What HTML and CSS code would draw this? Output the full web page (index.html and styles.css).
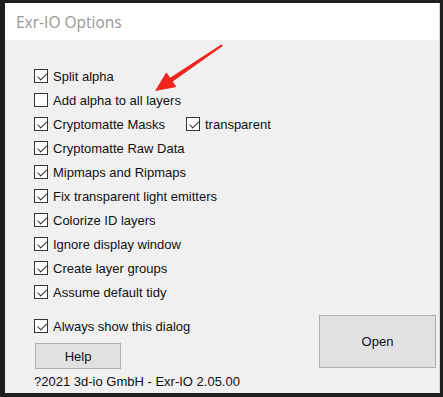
FILE: index.html
```html
<!DOCTYPE html>
<html lang="en">
<head>
  <meta charset="UTF-8" />
  <title>Exr-IO Options</title>
  <link rel="stylesheet" href="styles.css">
</head>
<body>

<div class="window">
  <div class="titlebar">
    <span class="title">Exr-IO Options</span>
  </div>

  <div class="content">
    <div class="options">
      <label class="row"><span class="box checked"></span>Split alpha</label>
      <label class="row"><span class="box"></span>Add alpha to all layers</label>
      <div class="row">
        <label class="opt"><span class="box checked"></span>Cryptomatte Masks</label>
        <label class="opt sub"><span class="box checked"></span>transparent</label>
      </div>
      <label class="row"><span class="box checked"></span>Cryptomatte Raw Data</label>
      <label class="row"><span class="box checked"></span>Mipmaps and Ripmaps</label>
      <label class="row"><span class="box checked"></span>Fix transparent light emitters</label>
      <label class="row"><span class="box checked"></span>Colorize ID layers</label>
      <label class="row"><span class="box checked"></span>Ignore display window</label>
      <label class="row"><span class="box checked"></span>Create layer groups</label>
      <label class="row"><span class="box checked"></span>Assume default tidy</label>
    </div>

    <div class="bottom">
      <div class="bottom-left">
        <label class="row"><span class="box checked"></span>Always show this dialog</label>
        <button class="btn help">Help</button>
        <p class="footer">?2021 3d-io GmbH - Exr-IO 2.05.00</p>
      </div>
      <button class="btn open">Open</button>
    </div>
  </div>

  <!-- red annotation arrow -->
  <svg class="arrow" width="90" height="65" viewBox="0 0 90 65">
    <polygon points="13,55 24.3,36.2 28.1,41.8 79.6,8.2 80.8,9.9 30.7,45.4 34.5,51" fill="#f0261e"/>
  </svg>
</div>

</body>
</html>
```

FILE: styles.css
```css
html, body {
  margin: 0;
  background: #1e1e1e;
}
body {
  width: 443px;
  height: 397px;
  overflow: hidden;
  font-family: 'Liberation Sans', Arial, sans-serif;
  font-size: 13px;
  color: #111;
}
.window {
  position: relative;
  margin: 3px 0 0 5px;
  width: 435px;
  height: 390px;
  background: #f0f0f0;
  border-right: 1px solid #d6d6d6;
  box-sizing: border-box;
}
.titlebar {
  height: 37px;
  background: #fff;
  padding-left: 11px;
  display: flex;
  align-items: center;
}
.title {
  font-family: 'Open Sans', sans-serif;
  font-size: 15.5px;
  color: #979797;
}
.content {
  padding: 24px 0 0 29px;
}
.row {
  display: flex;
  align-items: center;
  height: 24px;
}
.opt {
  display: flex;
  align-items: center;
}
.sub {
  margin-left: 21px;
}
.box {
  position: relative;
  width: 14px;
  height: 14px;
  border: 1px solid #333;
  background: #fff;
  box-sizing: border-box;
  margin-right: 5px;
}
.box.checked::after {
  content: '';
  position: absolute;
  left: 2px;
  top: 1px;
  width: 8px;
  height: 4px;
  border-left: 1px solid #333;
  border-bottom: 1px solid #333;
  transform: rotate(-45deg) translate(-1px, 2px);
}
.bottom {
  display: flex;
  align-items: flex-start;
  margin-top: 10px;
}
.bottom-left {
  width: 285px;
}
.btn {
  font-family: 'Liberation Sans', Arial, sans-serif;
  font-size: 13px;
  color: #111;
  background: #e1e1e1;
  border: 1px solid #adadad;
  padding: 0;
}
.help {
  display: block;
  margin: 5px 0 0 1px;
  width: 86px;
  height: 26px;
}
.open {
  margin-top: 1px;
  width: 117px;
  height: 53px;
}
.footer {
  margin: 5px 0 0;
  line-height: 16px;
}
.arrow {
  position: absolute;
  left: 137px;
  top: 33px;
}
```
